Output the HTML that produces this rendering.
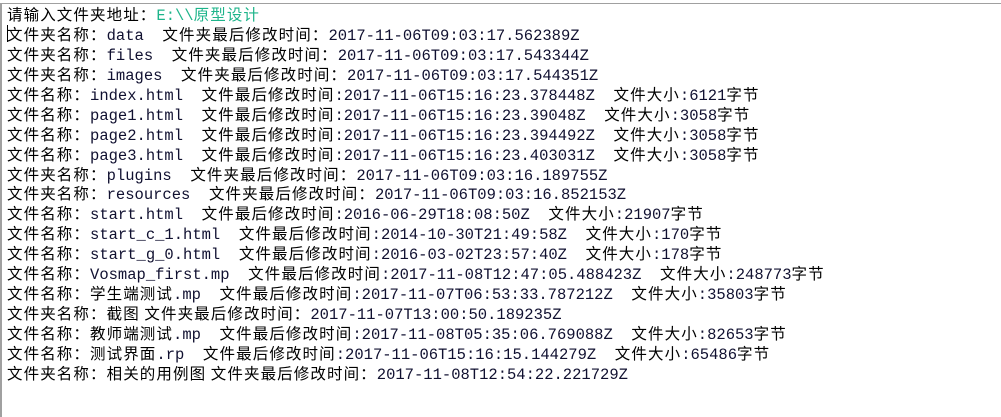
<!DOCTYPE html>
<html><head><meta charset="utf-8"><style>
html,body{margin:0;padding:0;background:#fff;width:1001px;height:417px;overflow:hidden}
.frame{position:absolute;left:0;top:3px;width:1001px;height:414px;border-top:1px solid #a0a0a0;border-left:2px solid #a0a0a0;box-sizing:border-box}
.t{position:absolute;left:7px;top:4px;font-family:"Liberation Mono","Noto Sans CJK SC",monospace;font-size:15.5px;color:#101030}
.t div{height:19.95px;line-height:20px;overflow:visible;white-space:pre}
b{font-weight:normal;color:#000;letter-spacing:1.1px;font-family:"Noto Sans CJK SC",sans-serif;line-height:20px}
.g{color:#1db48a}
.cur{position:absolute;left:7px;top:25px;width:1px;height:17px;background:#000}
</style></head><body>
<div class="frame"></div>
<div class="cur"></div>
<div class="t"><div><b>请输入文件夹地址：</b><span class="g">E:\\<b style="color:#1db48a">原型设计</b></span></div><div><b>文件夹名称：</b>data  <b>文件夹最后修改时间：</b>2017-11-06T09:03:17.562389Z</div><div><b>文件夹名称：</b>files  <b>文件夹最后修改时间：</b>2017-11-06T09:03:17.543344Z</div><div><b>文件夹名称：</b>images  <b>文件夹最后修改时间：</b>2017-11-06T09:03:17.544351Z</div><div><b>文件名称：</b>index.html  <b>文件最后修改时间</b>:2017-11-06T15:16:23.378448Z  <b>文件大小</b>:6121<b>字节</b></div><div><b>文件名称：</b>page1.html  <b>文件最后修改时间</b>:2017-11-06T15:16:23.39048Z  <b>文件大小</b>:3058<b>字节</b></div><div><b>文件名称：</b>page2.html  <b>文件最后修改时间</b>:2017-11-06T15:16:23.394492Z  <b>文件大小</b>:3058<b>字节</b></div><div><b>文件名称：</b>page3.html  <b>文件最后修改时间</b>:2017-11-06T15:16:23.403031Z  <b>文件大小</b>:3058<b>字节</b></div><div><b>文件夹名称：</b>plugins  <b>文件夹最后修改时间：</b>2017-11-06T09:03:16.189755Z</div><div><b>文件夹名称：</b>resources  <b>文件夹最后修改时间：</b>2017-11-06T09:03:16.852153Z</div><div><b>文件名称：</b>start.html  <b>文件最后修改时间</b>:2016-06-29T18:08:50Z  <b>文件大小</b>:21907<b>字节</b></div><div><b>文件名称：</b>start_c_1.html  <b>文件最后修改时间</b>:2014-10-30T21:49:58Z  <b>文件大小</b>:170<b>字节</b></div><div><b>文件名称：</b>start_g_0.html  <b>文件最后修改时间</b>:2016-03-02T23:57:40Z  <b>文件大小</b>:178<b>字节</b></div><div><b>文件名称：</b>Vosmap_first.mp  <b>文件最后修改时间</b>:2017-11-08T12:47:05.488423Z  <b>文件大小</b>:248773<b>字节</b></div><div><b>文件名称：学生端测试</b>.mp  <b>文件最后修改时间</b>:2017-11-07T06:53:33.787212Z  <b>文件大小</b>:35803<b>字节</b></div><div><b>文件夹名称：截图 文件夹最后修改时间：</b>2017-11-07T13:00:50.189235Z</div><div><b>文件名称：教师端测试</b>.mp  <b>文件最后修改时间</b>:2017-11-08T05:35:06.769088Z  <b>文件大小</b>:82653<b>字节</b></div><div><b>文件名称：测试界面</b>.rp  <b>文件最后修改时间</b>:2017-11-06T15:16:15.144279Z  <b>文件大小</b>:65486<b>字节</b></div><div><b>文件夹名称：相关的用例图 文件夹最后修改时间：</b>2017-11-08T12:54:22.221729Z</div></div>
</body></html>
